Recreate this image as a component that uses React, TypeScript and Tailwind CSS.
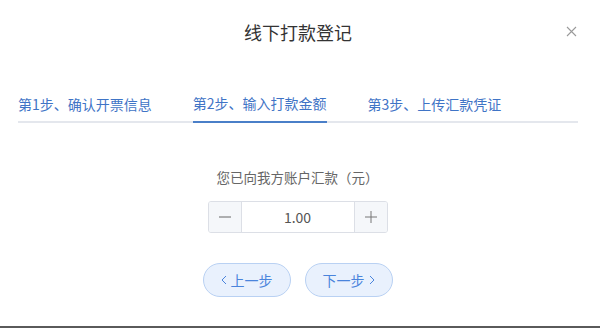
import React from "react";

export default function App() {
  const font = { fontFamily: '"Noto Sans CJK SC", "Noto Sans", sans-serif' };
  return (
    <div
      className="relative w-[600px] h-[328px] bg-white border-b-2 border-[#5a5a5a] flex flex-col"
      style={font}
    >
      <div className="h-[64px] flex items-center justify-center pr-[4px]">
        <span className="text-[18px] text-[#333333] leading-none">线下打款登记</span>
      </div>
      <button className="absolute left-[565px] top-[25px] w-[12px] h-[12px] flex items-center justify-center">
        <svg width="11" height="11" viewBox="0 0 11 11">
          <path d="M1 1L10 10M10 1L1 10" stroke="#9a9a9a" strokeWidth="1.1" />
        </svg>
      </button>

      <div className="mt-[21px] ml-[18px] mr-[22px] h-[38px] border-b-2 border-[#e4e7ed] flex gap-[41px]">
        <div className="h-[38px] flex items-center text-[14px] text-[#3f74c6]">第1步、确认开票信息</div>
        <div className="h-[38px] -mb-[2px] border-b-2 border-[#4a7fc8] flex items-center text-[14px] text-[#3f74c6]">
          第2步、输入打款金额
        </div>
        <div className="h-[38px] flex items-center text-[14px] text-[#3f74c6]">第3步、上传汇款凭证</div>
      </div>

      <div className="mt-[44px] flex flex-col items-center pr-[5px]">
        <div className="h-[20px] flex items-center text-[13.5px] text-[#666666]">您已向我方账户汇款（元）</div>
        <div className="mt-[14px] w-[180px] h-[32px] border border-[#dcdfe6] rounded-[3px] flex overflow-hidden">
          <div className="w-[33px] h-full bg-[#f5f7fa] border-r border-[#dcdfe6] flex items-center justify-center">
            <svg width="12" height="2" viewBox="0 0 12 2">
              <path d="M0 1H12" stroke="#666" strokeWidth="1" />
            </svg>
          </div>
          <div className="flex-1 flex items-center justify-center text-[14px] text-[#555555]">1.00</div>
          <div className="w-[33px] h-full bg-[#f5f7fa] border-l border-[#dcdfe6] flex items-center justify-center">
            <svg width="12" height="12" viewBox="0 0 12 12">
              <path d="M0 6H12M6 0V12" stroke="#777" strokeWidth="1" />
            </svg>
          </div>
        </div>
        <div className="mt-[30px] flex gap-[14px]">
          <button className="w-[88px] h-[34px] rounded-full bg-[#e9f1fd] border border-[#b9d1f3] flex items-center justify-center gap-[4px] text-[14px] text-[#4a84dc]">
            <svg width="6" height="10" viewBox="0 0 6 10">
              <path d="M5 1L1 5L5 9" stroke="#4a84dc" strokeWidth="1" fill="none" />
            </svg>
            <span>上一步</span>
          </button>
          <button className="w-[88px] h-[34px] rounded-full bg-[#e9f1fd] border border-[#b9d1f3] flex items-center justify-center gap-[4px] text-[14px] text-[#4a84dc]">
            <span>下一步</span>
            <svg width="6" height="10" viewBox="0 0 6 10">
              <path d="M1 1L5 5L1 9" stroke="#4a84dc" strokeWidth="1" fill="none" />
            </svg>
          </button>
        </div>
      </div>
    </div>
  );
}
